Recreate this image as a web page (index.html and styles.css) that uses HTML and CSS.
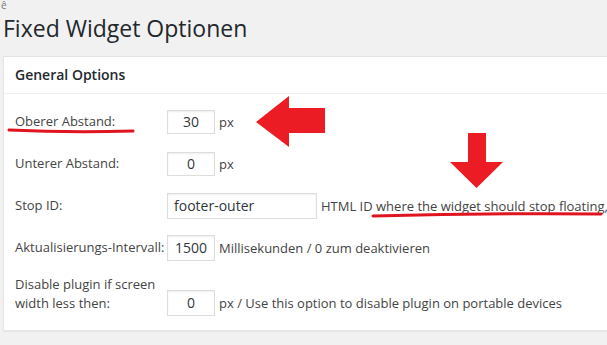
FILE: index.html
```html
<!DOCTYPE html>
<html lang="de">
<head>
    <meta charset="UTF-8">
    <title>Fixed Widget Optionen</title>
    <link rel="stylesheet" href="styles.css">
</head>
<body>
    <span class="stray">ê</span>
    <div class="wrap">
        <h1>Fixed Widget Optionen</h1>
        <div class="postbox">
            <h3 class="hndle">General Options</h3>
            <div class="inside">
                <div class="form-row">
                    <label>Oberer Abstand:</label>
                    <div class="field"><input class="small" type="text" value="30"> <span>px</span></div>
                </div>
                <div class="form-row">
                    <label>Unterer Abstand:</label>
                    <div class="field"><input class="small" type="text" value="0"> <span>px</span></div>
                </div>
                <div class="form-row">
                    <label>Stop ID:</label>
                    <div class="field"><input class="wide" type="text" value="footer-outer"> <span>HTML ID where the widget should stop floating,</span></div>
                </div>
                <div class="form-row">
                    <label>Aktualisierungs-Intervall:</label>
                    <div class="field"><input class="small" type="text" value="1500"> <span>Millisekunden / 0 zum deaktivieren</span></div>
                </div>
                <div class="form-row last">
                    <label>Disable plugin if screen width less then:</label>
                    <div class="field"><input class="small" type="text" value="0"> <span>px / Use this option to disable plugin on portable devices</span></div>
                </div>
            </div>
        </div>
    </div>

    <!-- rote Markierungen -->
    <svg class="marks" width="607" height="345" viewBox="0 0 607 345">
        <polygon points="256,122 289,96 289,108 325,108 325,133 289,133 289,147" fill="#ec1c24"/>
        <polygon points="468,133 486,133 486,162 503,162 476.5,188 450,162 468,162" fill="#ec1c24"/>
        <path d="M9 130 Q70 133 133 131" stroke="#e0141e" stroke-width="3" fill="none" stroke-linecap="round"/>
        <path d="M373 216 Q490 213 601 214" stroke="#e0141e" stroke-width="3" fill="none" stroke-linecap="round"/>
    </svg>
</body>
</html>
```

FILE: styles.css
```css
* {
    box-sizing: border-box;
}

body {
    margin: 0;
    height: 345px;
    overflow: hidden;
    position: relative;
    background-color: #f1f1f1;
    color: #444;
    font-family: "Open Sans", sans-serif;
    font-size: 13px;
}

.stray {
    position: absolute;
    left: 1px;
    top: 0;
    font-size: 10px;
    line-height: 10px;
    color: #777;
}

.wrap {
    margin-left: 3px;
    margin-right: -20px;
}

h1 {
    margin: 0;
    padding-top: 14px;
    font-size: 23px;
    font-weight: 400;
    line-height: 29px;
    color: #23282d;
}

.postbox {
    margin-top: 13px;
    background-color: #fff;
    border: 1px solid #e5e5e5;
    box-shadow: 0 1px 1px rgba(0, 0, 0, 0.04);
}

.hndle {
    margin: 0;
    padding: 8px 11px;
    font-size: 14px;
    font-weight: 600;
    line-height: 1.4;
    color: #23282d;
    border-bottom: 1px solid #eee;
}

.inside {
    padding: 7px 0 14px 11px;
}

.form-row {
    display: grid;
    grid-template-columns: 152px auto;
    align-items: center;
    height: 42px;
}

.form-row.last {
    height: 47px;
    align-items: end;
}

.form-row.last label {
    padding-bottom: 3px;
}

label {
    line-height: 19px;
    color: #444;
}

.field {
    display: flex;
    align-items: center;
    gap: 4px;
    white-space: nowrap;
}

input {
    height: 24px;
    margin: 0;
    padding: 2px 6px;
    font-family: "Open Sans", sans-serif;
    font-size: 14px;
    color: #32373c;
    border: 1px solid #ddd;
    box-shadow: inset 0 1px 2px rgba(0, 0, 0, 0.07);
    outline: none;
}

.form-row:nth-child(n+3) input {
    height: 26px;
}

input.small {
    width: 48px;
    text-align: center;
}

input.wide {
    width: 150px;
}

.marks {
    position: absolute;
    left: 0;
    top: 0;
}
```
